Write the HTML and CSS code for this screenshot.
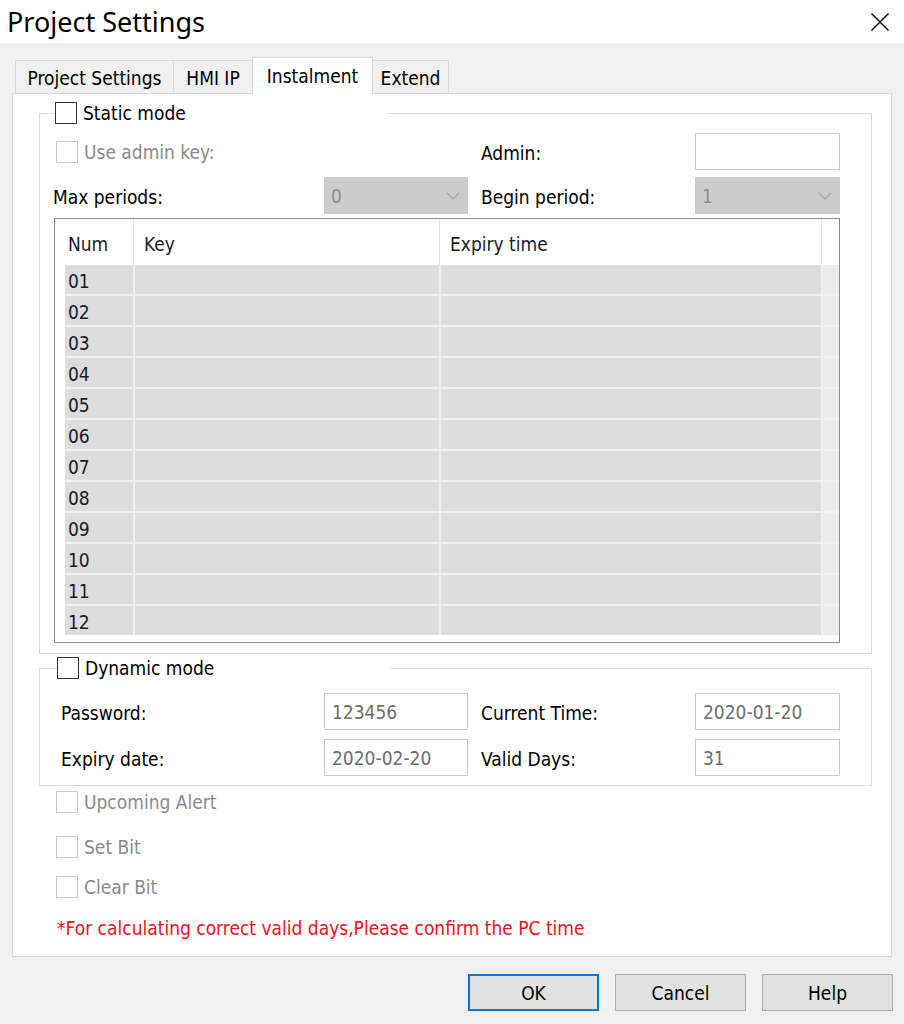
FILE: index.html
```html
<!DOCTYPE html>
<html>
<head>
<meta charset="utf-8">
<title>Project Settings</title>
<link rel="stylesheet" href="styles.css">
</head>
<body>
<div class="dialog">
  <header class="titlebar">
    <h1 class="title">Project Settings</h1>
    <svg class="close" viewBox="0 0 20 20" aria-hidden="true"><path d="M1.5 1.5L18.5 18.5M18.5 1.5L1.5 18.5"/></svg>
  </header>
  <main class="client">
    <nav class="tabs">
      <div class="tab tab-project">Project Settings</div>
      <div class="tab tab-hmi">HMI IP</div>
      <div class="tab tab-inst active">Instalment</div>
      <div class="tab tab-extend">Extend</div>
    </nav>
    <section class="panel">
      <fieldset class="group group-static">
        <legend class="group-legend"><span class="legend-inner"><span class="check"></span><span>Static mode</span></span></legend>
        <div class="form-grid">
          <div class="check-row disabled"><span class="check"></span><span>Use admin key:</span></div>
          <div></div>
          <div class="lbl lbl-right">Admin:</div>
          <div class="field"></div>
          <div class="lbl lbl-first">Max periods:</div>
          <div class="combo"><span>0</span><svg class="chev" viewBox="0 0 14 8"><polyline points="1,1 7,7 13,1"/></svg></div>
          <div class="lbl lbl-right">Begin period:</div>
          <div class="combo"><span>1</span><svg class="chev" viewBox="0 0 14 8"><polyline points="1,1 7,7 13,1"/></svg></div>
        </div>
        <div class="table">
          <div class="thead">
            <div class="th th-pad"></div>
            <div class="th th-num">Num</div>
            <div class="th th-key">Key</div>
            <div class="th th-exp">Expiry time</div>
            <div class="th th-fill"></div>
          </div>
          <div class="tbody">
            <div class="trow"><div class="cell cell-num">01</div><div class="cell"></div><div class="cell"></div><div class="cell cell-fill"></div></div>
            <div class="trow"><div class="cell cell-num">02</div><div class="cell"></div><div class="cell"></div><div class="cell cell-fill"></div></div>
            <div class="trow"><div class="cell cell-num">03</div><div class="cell"></div><div class="cell"></div><div class="cell cell-fill"></div></div>
            <div class="trow"><div class="cell cell-num">04</div><div class="cell"></div><div class="cell"></div><div class="cell cell-fill"></div></div>
            <div class="trow"><div class="cell cell-num">05</div><div class="cell"></div><div class="cell"></div><div class="cell cell-fill"></div></div>
            <div class="trow"><div class="cell cell-num">06</div><div class="cell"></div><div class="cell"></div><div class="cell cell-fill"></div></div>
            <div class="trow"><div class="cell cell-num">07</div><div class="cell"></div><div class="cell"></div><div class="cell cell-fill"></div></div>
            <div class="trow"><div class="cell cell-num">08</div><div class="cell"></div><div class="cell"></div><div class="cell cell-fill"></div></div>
            <div class="trow"><div class="cell cell-num">09</div><div class="cell"></div><div class="cell"></div><div class="cell cell-fill"></div></div>
            <div class="trow"><div class="cell cell-num">10</div><div class="cell"></div><div class="cell"></div><div class="cell cell-fill"></div></div>
            <div class="trow"><div class="cell cell-num">11</div><div class="cell"></div><div class="cell"></div><div class="cell cell-fill"></div></div>
            <div class="trow"><div class="cell cell-num">12</div><div class="cell"></div><div class="cell"></div><div class="cell cell-fill"></div></div>
          </div>
        </div>
      </fieldset>

      <fieldset class="group group-dynamic">
        <legend class="group-legend legend-dyn"><span class="legend-inner"><span class="check"></span><span>Dynamic mode</span></span></legend>
        <div class="form-grid form-grid-dyn">
          <div class="lbl lbl-indent">Password:</div>
          <div class="field">123456</div>
          <div class="lbl lbl-right">Current Time:</div>
          <div class="field">2020-01-20</div>
          <div class="lbl lbl-indent">Expiry date:</div>
          <div class="field">2020-02-20</div>
          <div class="lbl lbl-right">Valid Days:</div>
          <div class="field">31</div>
        </div>
      </fieldset>

      <div class="options">
        <div class="check-row disabled opt-alert"><span class="check"></span><span>Upcoming Alert</span></div>
        <div class="check-row disabled opt-set"><span class="check"></span><span>Set Bit</span></div>
        <div class="check-row disabled opt-clear"><span class="check"></span><span>Clear Bit</span></div>
        <p class="warning">*For calculating correct valid days,Please confirm the PC time</p>
      </div>
    </section>

    <div class="buttons">
      <button class="btn btn-default" type="button">OK</button>
      <button class="btn" type="button">Cancel</button>
      <button class="btn" type="button">Help</button>
    </div>
  </main>
</div>
</body>
</html>
```

FILE: styles.css
```css
* { box-sizing: border-box; }

html, body {
  margin: 0;
  padding: 0;
}

body {
  width: 904px;
  height: 1024px;
  overflow: hidden;
  background: #f0f0f0;
  font-family: "DejaVu Sans Condensed", "DejaVu Sans", sans-serif;
  font-stretch: semi-condensed;
  font-size: 19px;
  color: #000;
}

.titlebar {
  height: 43px;
  background: #fff;
  display: flex;
  align-items: center;
  justify-content: space-between;
  padding: 0 14px 0 7px;
}

.title {
  margin: 0;
  font-family: "Noto Sans", "Liberation Sans", sans-serif;
  font-stretch: normal;
  font-weight: 400;
  font-size: 27px;
  line-height: 1;
}

.close {
  width: 20px;
  height: 20px;
  fill: none;
  stroke: #111;
  stroke-width: 1.5;
}

.client {
  background: #f0f0f0;
}

/* Tabs */
.tabs {
  display: flex;
  align-items: flex-end;
  margin-top: 14px;
  padding-left: 15px;
}

.tab {
  height: 33px;
  border: 1px solid #d9d9d9;
  border-bottom: none;
  background: #f0f0f0;
  display: flex;
  align-items: center;
  justify-content: center;
  padding-top: 2px;
  white-space: nowrap;
}

.tab + .tab { margin-left: -1px; }

.tab-project { width: 159px; }
.tab-hmi { width: 80px; }
.tab-inst { width: 121px; }
.tab-extend { width: 77px; }

.tab.active {
  height: 37px;
  background: #fff;
  margin-bottom: -1px;
  padding-top: 0;
  position: relative;
  z-index: 1;
}

/* Panel */
.panel {
  margin-left: 12px;
  width: 880px;
  height: 864px;
  background: #fff;
  border: 1px solid #d9d9d9;
  padding-top: 8px;
}

.group {
  margin: 0 19px 0 26px;
  border: 1px solid #dcdcdc;
  padding: 9px 31px 10px 14px;
  min-width: 0;
}

.group-dynamic {
  margin-top: 3px;
  padding: 14px 31px 9px 14px;
}

.group-legend {
  width: 333px;
  padding: 0;
  margin-left: 1px;
  height: 22px;
}

.legend-dyn { margin-left: 3px; }

.legend-inner {
  display: flex;
  align-items: center;
  gap: 6px;
  height: 22px;
}

.check {
  width: 22px;
  height: 22px;
  border: 1px solid #333;
  background: #fff;
  flex: none;
}

.check-row {
  display: flex;
  align-items: center;
  gap: 6px;
  height: 22px;
}

.check-row.disabled { color: #8a8a8a; }
.check-row.disabled .check { border-color: #cccccc; }

.form-grid {
  display: grid;
  grid-template-columns: 270px 144px 227px 145px;
  grid-auto-rows: 37px;
  row-gap: 7px;
  align-items: center;
}

.form-grid .check-row { margin-left: 2px; }

.form-grid-dyn { row-gap: 9px; }

.lbl { white-space: nowrap; padding-top: 2px; }
.lbl-first { margin-left: -1px; }
.lbl-right { padding-left: 13px; }
.lbl-indent { padding-left: 7px; }

.field {
  height: 37px;
  border: 1px solid #cccccc;
  background: #fff;
  color: #6d6d6d;
  padding-left: 7px;
  display: flex;
  align-items: center;
}

.combo {
  height: 37px;
  background: #cccccc;
  color: #8d8d8d;
  padding: 0 8px 0 7px;
  display: flex;
  align-items: center;
  justify-content: space-between;
}

.chev {
  width: 14px;
  height: 8px;
  fill: none;
  stroke: #a3a3a3;
  stroke-width: 1.2;
}

/* Table */
.table {
  margin-top: 4px;
  height: 425px;
  border: 1px solid #8a8a8a;
  background: #fff;
}

.thead {
  display: grid;
  grid-template-columns: 10px 69px 306px 382px 1fr;
  height: 46px;
}

.th {
  display: flex;
  align-items: center;
  border-right: 1px solid #e5e5e5;
  color: #1a1a2a;
  padding-top: 3px;
}

.th-pad, .th-fill { border-right: none; }
.th-num { padding-left: 3px; }
.th-key, .th-exp { padding-left: 10px; }

.tbody {
  margin-left: 10px;
  display: grid;
  row-gap: 2px;
  background: #f0f0f0;
}

.trow {
  display: grid;
  grid-template-columns: 68px 304px 380px 1fr;
  column-gap: 2px;
  height: 29px;
}

.cell { background: #dddddd; }

.cell-num {
  padding: 3px 0 0 3px;
  display: flex;
  align-items: center;
  color: #1a1a2a;
}

.cell-fill { background: #ebebeb; }

/* Options */
.options {
  padding-left: 43px;
  margin-top: 5px;
  display: flex;
  flex-direction: column;
}

.opt-set { margin-top: 23px; }
.opt-clear { margin-top: 18px; }

.warning {
  margin: 20px 0 0 1px;
  line-height: 20px;
  color: #ee1122;
}

/* Buttons */
.buttons {
  display: flex;
  justify-content: flex-end;
  gap: 16px;
  padding-right: 11px;
  margin-top: 17px;
}

.btn {
  width: 131px;
  height: 37px;
  background: #e1e1e1;
  border: 1px solid #adadad;
  display: flex;
  align-items: center;
  justify-content: center;
  font-family: inherit;
  font-stretch: inherit;
  font-size: 19px;
  color: #000;
  padding: 0;
}

.btn-default { border: 2px solid #0078d7; }
```
